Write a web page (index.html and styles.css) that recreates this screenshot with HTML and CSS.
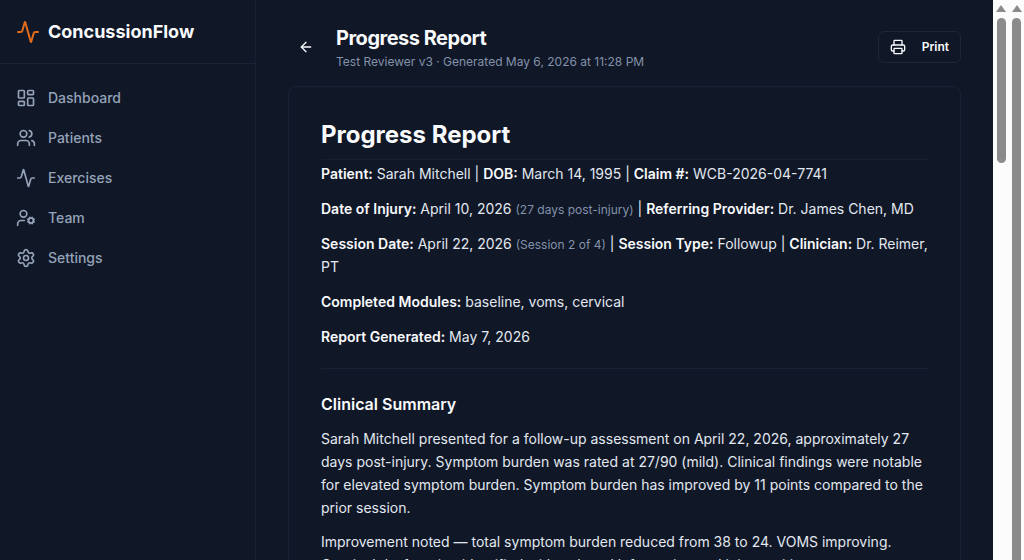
FILE: index.html
```html
<!DOCTYPE html>
<html lang="en">
  <head>
    <meta charset="UTF-8" />
    <meta name="viewport" content="width=device-width, initial-scale=1.0" />
    <title>Progress Report - ConcussionFlow</title>
    <link rel="stylesheet" href="styles.css">
  </head>
  <body>
    <div class="app">
      <aside class="sidebar">
        <div class="brand">
          <svg class="brand-icon" viewBox="0 0 24 24" aria-hidden="true">
            <path d="M22 12h-2.48a2 2 0 0 0-1.93 1.46l-2.35 8.36a.25.25 0 0 1-.48 0L9.24 2.18a.25.25 0 0 0-.48 0l-2.35 8.36A2 2 0 0 1 4.49 12H2" />
          </svg>
          <span>ConcussionFlow</span>
        </div>
        <nav class="nav">
          <a href="#" class="nav-link">
            <svg class="icon" viewBox="0 0 24 24" aria-hidden="true">
              <rect width="7" height="9" x="3" y="3" rx="1" />
              <rect width="7" height="5" x="14" y="3" rx="1" />
              <rect width="7" height="9" x="14" y="12" rx="1" />
              <rect width="7" height="5" x="3" y="16" rx="1" />
            </svg>
            Dashboard
          </a>
          <a href="#" class="nav-link">
            <svg class="icon" viewBox="0 0 24 24" aria-hidden="true">
              <path d="M16 21v-2a4 4 0 0 0-4-4H6a4 4 0 0 0-4 4v2" />
              <circle cx="9" cy="7" r="4" />
              <path d="M22 21v-2a4 4 0 0 0-3-3.87" />
              <path d="M16 3.13a4 4 0 0 1 0 7.75" />
            </svg>
            Patients
          </a>
          <a href="#" class="nav-link">
            <svg class="icon" viewBox="0 0 24 24" aria-hidden="true">
              <path d="M22 12h-2.48a2 2 0 0 0-1.93 1.46l-2.35 8.36a.25.25 0 0 1-.48 0L9.24 2.18a.25.25 0 0 0-.48 0l-2.35 8.36A2 2 0 0 1 4.49 12H2" />
            </svg>
            Exercises
          </a>
          <a href="#" class="nav-link">
            <svg class="icon" viewBox="0 0 24 24" aria-hidden="true">
              <path d="M10 15H6a4 4 0 0 0-4 4v2" />
              <path d="m14.305 16.53.923-.382" />
              <path d="m15.228 13.852-.923-.383" />
              <path d="m16.852 12.228-.383-.923" />
              <path d="m16.852 17.772-.383.924" />
              <path d="m19.148 12.228.383-.923" />
              <path d="m19.53 18.696-.382-.924" />
              <path d="m20.772 13.852.924-.383" />
              <path d="m20.772 16.148.924.383" />
              <circle cx="18" cy="15" r="3" />
              <circle cx="9" cy="7" r="4" />
            </svg>
            Team
          </a>
          <a href="#" class="nav-link">
            <svg class="icon" viewBox="0 0 24 24" aria-hidden="true">
              <path d="M9.671 4.136a2.34 2.34 0 0 1 4.659 0 2.34 2.34 0 0 0 3.319 1.915 2.34 2.34 0 0 1 2.33 4.033 2.34 2.34 0 0 0 0 3.831 2.34 2.34 0 0 1-2.33 4.033 2.34 2.34 0 0 0-3.319 1.915 2.34 2.34 0 0 1-4.659 0 2.34 2.34 0 0 0-3.32-1.915 2.34 2.34 0 0 1-2.33-4.033 2.34 2.34 0 0 0 0-3.831A2.34 2.34 0 0 1 6.35 6.051a2.34 2.34 0 0 0 3.319-1.915" />
              <circle cx="12" cy="12" r="3" />
            </svg>
            Settings
          </a>
        </nav>
      </aside>

      <main class="main">
        <header class="page-header">
          <button type="button" class="back-btn" aria-label="Back">
            <svg class="icon icon-sm" viewBox="0 0 24 24" aria-hidden="true">
              <path d="m12 19-7-7 7-7" />
              <path d="M19 12H5" />
            </svg>
          </button>
          <div class="page-title">
            <h1>Progress Report</h1>
            <p>Test Reviewer v3 · Generated May 6, 2026 at 11:28 PM</p>
          </div>
          <button type="button" class="print-btn">
            <svg class="icon icon-sm" viewBox="0 0 24 24" aria-hidden="true">
              <path d="M6 18H4a2 2 0 0 1-2-2v-5a2 2 0 0 1 2-2h16a2 2 0 0 1 2 2v5a2 2 0 0 1-2 2h-2" />
              <path d="M6 9V3a1 1 0 0 1 1-1h10a1 1 0 0 1 1 1v6" />
              <rect x="6" y="14" width="12" height="8" rx="1" />
            </svg>
            Print
          </button>
        </header>

        <article class="report">
          <h2>Progress Report</h2>
          <p><strong>Patient:</strong> Sarah Mitchell | <strong>DOB:</strong> March 14, 1995 | <strong>Claim #:</strong> WCB-2026-04-7741</p>
          <p><strong>Date of Injury:</strong> April 10, 2026 <small>(27 days post-injury)</small> | <strong>Referring Provider:</strong> Dr. James Chen, MD</p>
          <p><strong>Session Date:</strong> April 22, 2026 <small>(Session 2 of 4)</small> | <strong>Session Type:</strong> Followup | <strong>Clinician:</strong> Dr. Reimer, PT</p>
          <p><strong>Completed Modules:</strong> baseline, voms, cervical</p>
          <p><strong>Report Generated:</strong> May 7, 2026</p>
          <hr />
          <h3>Clinical Summary</h3>
          <p>Sarah Mitchell presented for a follow-up assessment on April 22, 2026, approximately 27 days post-injury. Symptom burden was rated at 27/90 (mild). Clinical findings were notable for elevated symptom burden. Symptom burden has improved by 11 points compared to the prior session.</p>
          <p>Improvement noted — total symptom burden reduced from 38 to 24. VOMS improving. Cervical dysfunction identified with reduced left rotation and joint position error.</p>
        </article>
      </main>

      <div class="scrollbar" aria-hidden="true">
        <span class="scroll-arrow"></span>
        <span class="scroll-thumb scroll-thumb-short"></span>
      </div>
      <div class="scrollbar" aria-hidden="true">
        <span class="scroll-arrow"></span>
        <span class="scroll-thumb"></span>
      </div>
    </div>
  </body>
</html>
```
FILE: styles.css
```css
* {
  box-sizing: border-box;
}
body {
  margin: 0;
  font-family: Inter, "Liberation Sans", sans-serif;
  font-size: 14px;
  color: #e2e8f0;
  background-color: #101727;
}
h1,
h2,
h3,
p {
  margin: 0;
}
.app {
  display: flex;
  height: 100vh;
  overflow: hidden;
}
.icon {
  width: 20px;
  height: 20px;
  flex-shrink: 0;
  fill: none;
  stroke: currentColor;
  stroke-width: 2;
  stroke-linecap: round;
  stroke-linejoin: round;
}
.icon-sm {
  width: 16px;
  height: 16px;
}

/* Sidebar */
.sidebar {
  width: 256px;
  flex-shrink: 0;
  border-right: 1px solid #172033;
}
.brand {
  display: flex;
  align-items: center;
  gap: 8px;
  height: 64px;
  padding: 0 16px;
  border-bottom: 1px solid #1a2236;
  font-size: 18px;
  font-weight: 700;
  color: #f8fafc;
}
.brand-icon {
  width: 24px;
  height: 24px;
  fill: none;
  stroke: #e06c1c;
  stroke-width: 2;
  stroke-linecap: round;
  stroke-linejoin: round;
}
.nav {
  display: flex;
  flex-direction: column;
  padding: 14px 16px;
}
.nav-link {
  display: flex;
  align-items: center;
  gap: 12px;
  height: 40px;
  line-height: 20px;
  font-weight: 500;
  color: #94a3b8;
  text-decoration: none;
}
.nav-link:hover {
  color: #f8fafc;
}

/* Main column */
.main {
  flex: 1;
  min-width: 0;
  overflow: hidden;
  padding: 24px 32px;
}
.page-header {
  display: flex;
  align-items: center;
  gap: 12px;
  margin-bottom: 16px;
}
.back-btn {
  display: flex;
  align-items: center;
  justify-content: center;
  width: 36px;
  height: 36px;
  padding: 0;
  border: none;
  border-radius: 6px;
  background: none;
  color: #f8fafc;
  cursor: pointer;
}
.page-title {
  flex: 1;
}
.page-title h1 {
  font-size: 20px;
  line-height: 28px;
  font-weight: 700;
  letter-spacing: -0.5px;
  color: #f8fafc;
}
.page-title p {
  margin-top: 2px;
  font-size: 12px;
  line-height: 16px;
  color: #8292aa;
}
.print-btn {
  display: flex;
  align-items: center;
  gap: 16px;
  height: 32px;
  padding: 0 11px;
  border: 1px solid #1e273a;
  border-radius: 6px;
  background: none;
  font-family: inherit;
  font-size: 12px;
  line-height: 16px;
  font-weight: 600;
  color: #f8fafc;
  cursor: pointer;
}

/* Report */
.report {
  padding: 32px;
  border: 1px solid #172236;
  border-radius: 8px;
  line-height: 23px;
}
.report h2 {
  padding-bottom: 8px;
  margin-bottom: 2px;
  border-bottom: 1px solid #171f31;
  font-size: 24px;
  line-height: 32px;
  font-weight: 700;
  color: #f8fafc;
}
.report h3 {
  margin-bottom: 11px;
  font-size: 16px;
  line-height: 24px;
  font-weight: 600;
  color: #f8fafc;
}
.report p {
  margin-bottom: 12px;
}
.report h3 ~ p {
  margin-bottom: 11px;
}
.report strong {
  font-weight: 600;
  color: #f8fafc;
}
.report small {
  font-size: 12px;
  line-height: 16px;
  color: #8292aa;
}
.report hr {
  height: 1px;
  margin: 20px 0 23px;
  border: none;
  background-color: #172236;
}

/* Scrollbars */
.scrollbar {
  display: flex;
  flex-direction: column;
  align-items: center;
  gap: 6px;
  width: 16px;
  flex-shrink: 0;
  padding-top: 5px;
  background-color: #fcfcfc;
}
.scrollbar:last-child {
  width: 15px;
}
.scroll-arrow {
  border: 5px solid transparent;
  border-top: none;
  border-bottom: 7px solid #8b8b8b;
}
.scroll-thumb {
  flex: 1;
  width: 9px;
  border-radius: 5px 5px 0 0;
  background-color: #8b8b8b;
}
.scroll-thumb-short {
  flex: none;
  height: 145px;
  border-radius: 5px;
}
```
